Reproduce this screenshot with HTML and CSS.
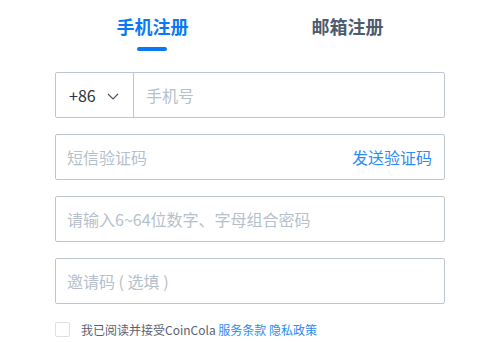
FILE: index.html
```html
<!DOCTYPE html>
<html lang="zh-CN">
<head>
<meta charset="utf-8">
<link rel="stylesheet" href="styles.css">
</head>
<body>
<div class="form">
  <div class="tabs">
    <div class="tab active">手机注册<span class="bar"></span></div>
    <div class="tab">邮箱注册</div>
  </div>
  <div class="field">
    <div class="code">+86
      <svg class="chev" width="12" height="7" viewBox="0 0 12 7"><path d="M1 1 L6 6 L11 1" fill="none" stroke="#4c5567" stroke-width="1.2"/></svg>
    </div>
    <div class="ph sep">手机号</div>
  </div>
  <div class="field">
    <div class="ph grow">短信验证码</div>
    <div class="send">发送验证码</div>
  </div>
  <div class="field">
    <div class="ph">请输入6~64位数字、字母组合密码</div>
  </div>
  <div class="field">
    <div class="ph">邀请码 ( 选填 )</div>
  </div>
  <div class="agree">
    <span class="box"></span>
    <span class="txt">我已阅读并接受CoinCola <a class="link">服务条款</a> <a class="link">隐私政策</a></span>
  </div>
</div>
</body>
</html>
```

FILE: styles.css
```css
html, body {
  margin: 0;
  padding: 0;
  background: #fff;
}
body {
  font-family: "Noto Sans CJK SC", "Noto Sans", sans-serif;
}
.form {
  width: 390px;
  margin-left: 55px;
  display: flex;
  flex-direction: column;
}
.tabs {
  display: flex;
  height: 72px;
}
.tab {
  flex: 1;
  text-align: center;
  font-size: 18px;
  font-weight: 700;
  color: #4d5b6c;
  padding-top: 13px;
  line-height: 26px;
  position: relative;
}
.tab.active {
  color: #0a78f5;
}
.bar {
  position: absolute;
  left: 82px;
  top: 47px;
  width: 30px;
  height: 4px;
  border-radius: 2px;
  background: #0a78f5;
}
.field {
  height: 44px;
  border: 1px solid #bcc6d1;
  border-radius: 2px;
  display: flex;
  align-items: center;
  margin-bottom: 16px;
  font-size: 16px;
}
.code {
  width: 78px;
  height: 100%;
  box-sizing: border-box;
  padding-left: 13px;
  display: flex;
  align-items: center;
  color: #2b3442;
  border-right: 1px solid #bcc6d1;
}
.chev {
  margin-left: 11px;
  margin-top: 2px;
}
.ph {
  color: #b6bfcc;
  padding-left: 11px;
}
.ph.sep {
  padding-left: 12px;
}
.grow {
  flex: 1;
}
.send {
  color: #2b8cf2;
  padding-right: 12px;
}
.agree {
  display: flex;
  align-items: center;
  margin-top: 1px;
  font-size: 12px;
}
.box {
  width: 13px;
  height: 13px;
  border: 1px solid #dcdfe6;
  border-radius: 2px;
  margin-right: 11px;
}
.txt {
  color: #5a6270;
}
.link {
  color: #2b8cf2;
}
```
